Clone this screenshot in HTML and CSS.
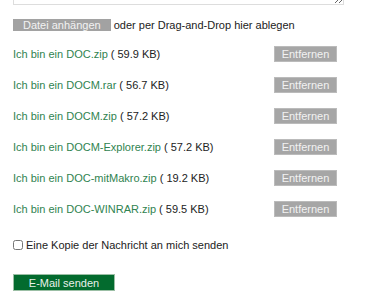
FILE: index.html
```html
<!DOCTYPE html>
<html lang="de">
<head>
    <meta charset="UTF-8">
    <meta name="viewport" content="width=device-width, initial-scale=1.0">
    <title>Kontakt</title>
    <link rel="stylesheet" href="styles.css">
</head>
<body>
    <div class="form">
        <textarea class="message"></textarea>

        <div class="upload">
            <button class="attach">Datei anhängen</button>
            <span>oder per Drag-and-Drop hier ablegen</span>
        </div>

        <ul class="files">
            <li><span class="name">Ich bin ein DOC.zip</span> ( 59.9 KB)<button class="remove">Entfernen</button></li>
            <li><span class="name">Ich bin ein DOCM.rar</span> ( 56.7 KB)<button class="remove">Entfernen</button></li>
            <li><span class="name">Ich bin ein DOCM.zip</span> ( 57.2 KB)<button class="remove">Entfernen</button></li>
            <li><span class="name">Ich bin ein DOCM-Explorer.zip</span> ( 57.2 KB)<button class="remove">Entfernen</button></li>
            <li><span class="name">Ich bin ein DOC-mitMakro.zip</span> ( 19.2 KB)<button class="remove">Entfernen</button></li>
            <li><span class="name">Ich bin ein DOC-WINRAR.zip</span> ( 59.5 KB)<button class="remove">Entfernen</button></li>
        </ul>

        <label class="copy"><input type="checkbox"> Eine Kopie der Nachricht an mich senden</label>

        <button class="send">E-Mail senden</button>
    </div>
</body>
</html>
```

FILE: styles.css
```css
body {
    margin: 0;
    font-family: "Liberation Sans", Arial, sans-serif;
    font-size: 11px;
    color: #222;
    background: #fff;
}

.form {
    padding: 0 13px;
    width: 331px;
}

.message {
    display: block;
    box-sizing: border-box;
    width: 331px;
    height: 40px;
    margin-top: -35px;
    border: 1px solid #ddd;
    resize: vertical;
}

.upload {
    margin-top: 13px;
    height: 13px;
    display: flex;
    align-items: center;
}

.attach {
    height: 12px;
    padding: 0 10px;
    margin-right: 3px;
    border: none;
    background: #a2a2a2;
    color: #f2f2f2;
    font: inherit;
    line-height: 12px;
}

.files {
    list-style: none;
    margin: 7px 0 0;
    padding: 0;
}

.files li {
    display: flex;
    align-items: center;
    height: 31px;
}

.name {
    color: #2f8350;
    margin-right: 3px;
}

.remove {
    margin-left: auto;
    margin-right: 7px;
    width: 63px;
    height: 16px;
    padding: 0;
    border: 1px solid #bbb;
    background: #a6a6a6;
    color: #f2f2f2;
    font: inherit;
}

.copy {
    display: flex;
    align-items: center;
    height: 13px;
    margin-top: 14px;
}

.copy input {
    margin: 0 3px 0 0;
    width: 10px;
    height: 10px;
}

.send {
    display: block;
    margin-top: 23px;
    width: 102px;
    height: 17px;
    padding: 0;
    border: 1px solid #9bbfa5;
    background: #036b2e;
    color: #e8f0ea;
    font: inherit;
}
```
